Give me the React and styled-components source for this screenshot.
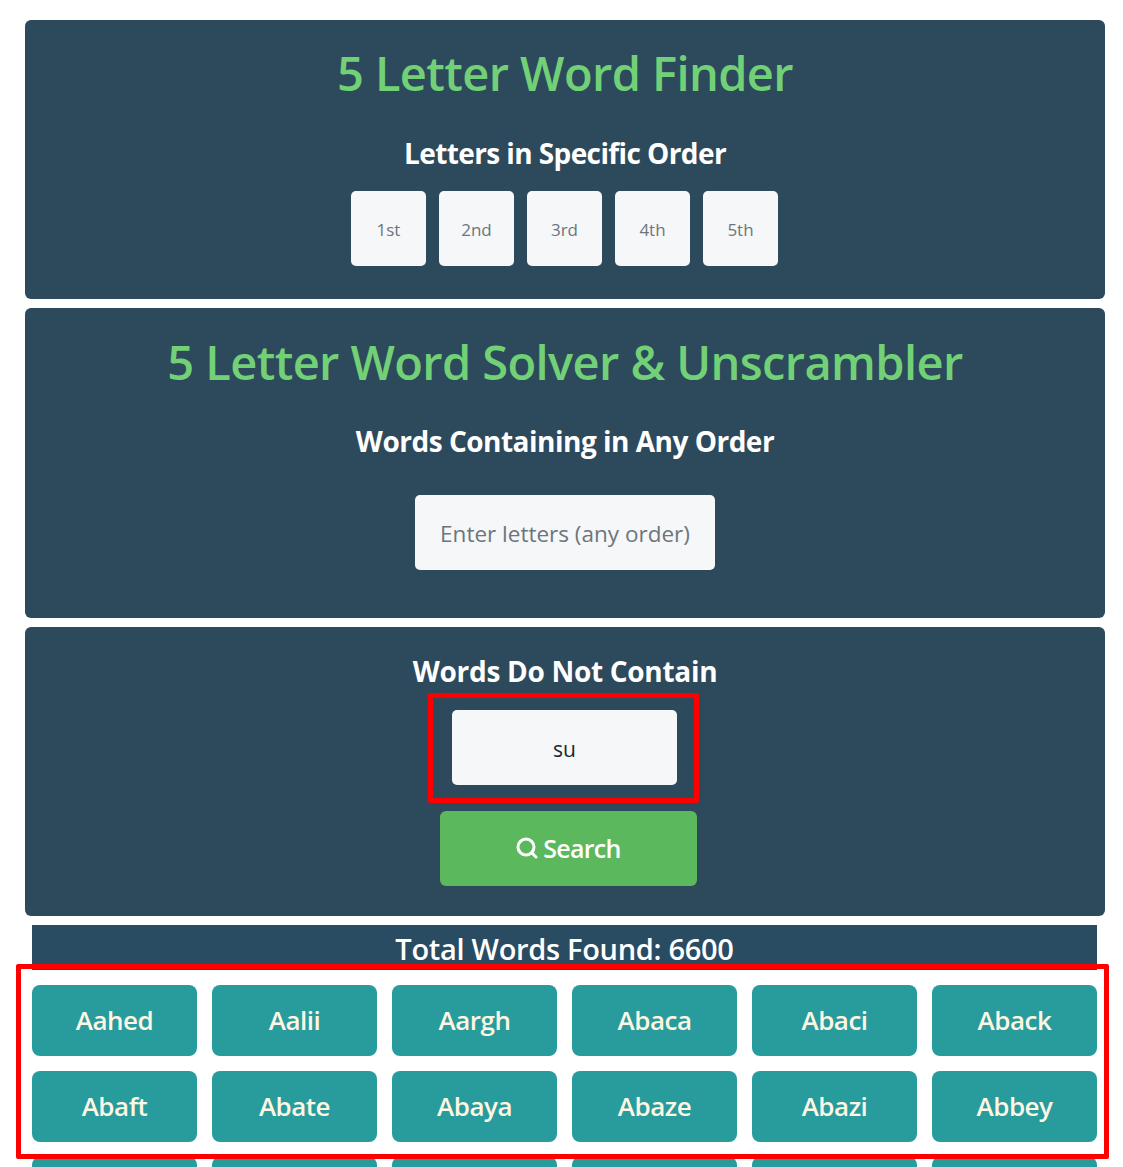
import styled, { createGlobalStyle } from "styled-components";

const GlobalStyle = createGlobalStyle`
  html, body {
    margin: 0;
    height: 100%;
    overflow: hidden;
    background: #fff;
    font-family: "Open Sans", "Noto Sans", sans-serif;
  }
`;

const Page = styled.div`
  padding: 20px 18px 0 25px;
`;

const Panel = styled.section`
  display: flex;
  flex-direction: column;
  align-items: center;
  background: #2d4a5c;
  border-radius: 6px;
  margin-bottom: 9px;
  height: ${(p) => p.$height}px;
  padding-top: ${(p) => p.$top}px;
  box-sizing: border-box;
`;

const Title = styled.h1`
  margin: 0;
  color: #72d177;
  font-size: 47px;
  font-weight: 600;
  line-height: 60px;
  letter-spacing: -0.6px;
`;

const SubTitle = styled.h2`
  margin: ${(p) => p.$top || 0}px 0 0;
  color: #fff;
  font-size: 28px;
  font-weight: 700;
  line-height: 36px;
  letter-spacing: ${(p) => p.$spacing ?? -0.6}px;
`;

const LetterRow = styled.div`
  display: flex;
  gap: 13px;
  margin: 20px 1px 0 0;
`;

const Field = styled.input`
  display: block;
  box-sizing: border-box;
  width: ${(p) => p.$width}px;
  height: 75px;
  border: 0;
  border-radius: 5px;
  background: #f6f7f9;
  color: #212529;
  font-family: inherit;
  font-size: ${(p) => p.$size}px;
  text-align: center;
  outline: none;
  padding: 2px 0 0;
  &::placeholder {
    color: #6c757d;
    opacity: 1;
  }
`;

const AnyOrderWrap = styled.div`
  margin-top: 36px;
`;

const Highlighted = styled.div`
  position: relative;
  margin: 21px 1px 0 0;
`;

const RedBox = styled.span`
  position: absolute;
  top: ${(p) => p.$top}px;
  left: ${(p) => p.$left}px;
  right: ${(p) => p.$right}px;
  bottom: ${(p) => p.$bottom}px;
  border: 5px solid #fe0000;
  border-radius: 2px;
  pointer-events: none;
  z-index: 2;
`;

const SearchButton = styled.button`
  display: flex;
  align-items: center;
  justify-content: center;
  gap: 5px;
  width: 257px;
  height: 75px;
  margin: 26px 0 0 7px;
  border: 0;
  border-radius: 6px;
  background: #5cb85c;
  color: #fff;
  font-family: inherit;
  font-size: 25px;
  font-weight: 600;
  letter-spacing: -0.7px;
  padding: 0 0 1px;
`;

const TotalBar = styled.div`
  margin: 0 8px 0 7px;
  height: 45px;
  background: #294c62;
  color: #fff;
  font-size: 29px;
  font-weight: 600;
  line-height: 47px;
  text-align: center;
  letter-spacing: -0.3px;
`;

const WordSection = styled.div`
  margin: 15px 8px 0 7px;
`;

const Highlight = styled.div`
  position: relative;
`;

const WordGrid = styled.div`
  display: grid;
  grid-template-columns: repeat(6, 165px);
  grid-auto-rows: 71px;
  gap: 15px;
`;

const WordButton = styled.button`
  border: 0;
  border-radius: 8px;
  background: #289c9c;
  color: #fdf6e3;
  font-family: inherit;
  font-size: 26px;
  font-weight: 600;
  letter-spacing: -0.5px;
  padding: 0 0 1px;
`;

const NextRow = styled(WordGrid)`
  margin-top: 15px;
`;

const SearchIcon = () => (
  <svg width="22" height="22" viewBox="0 0 22 22" fill="none" stroke="#fff" strokeWidth="3" strokeLinecap="round">
    <circle cx="10" cy="10" r="8" />
    <path d="M16 16l4 4" />
  </svg>
);

const positions = ["1st", "2nd", "3rd", "4th", "5th"];
const words = ["Aahed", "Aalii", "Aargh", "Abaca", "Abaci", "Aback", "Abaft", "Abate", "Abaya", "Abaze", "Abazi", "Abbey"];

export default function App() {
  return (
    <Page>
      <GlobalStyle />
      <Panel $height={279} $top={23}>
        <Title>5 Letter Word Finder</Title>
        <SubTitle $top={32}>Letters in Specific Order</SubTitle>
        <LetterRow>
          {positions.map((p) => (
            <Field key={p} $width={75} $size={17} placeholder={p} />
          ))}
        </LetterRow>
      </Panel>

      <Panel $height={310} $top={24}>
        <Title>5 Letter Word Solver &amp; Unscrambler</Title>
        <SubTitle $top={31} $spacing={-0.5}>Words Containing in Any Order</SubTitle>
        <AnyOrderWrap>
          <Field $width={300} $size={22.5} placeholder="Enter letters (any order)" />
        </AnyOrderWrap>
      </Panel>

      <Panel $height={289} $top={26}>
        <SubTitle $spacing={-0.3}>Words Do Not Contain</SubTitle>
        <Highlighted>
          <Field $width={225} $size={21} defaultValue="su" />
          <RedBox $top={-17} $left={-24} $right={-22} $bottom={-18} />
        </Highlighted>
        <SearchButton>
          <SearchIcon />
          Search
        </SearchButton>
      </Panel>

      <TotalBar>Total Words Found: 6600</TotalBar>

      <WordSection>
        <Highlight>
          <WordGrid>
            {words.map((w) => (
              <WordButton key={w}>{w}</WordButton>
            ))}
          </WordGrid>
          <RedBox $top={-21} $left={-16} $right={-12} $bottom={-17} />
        </Highlight>
        <NextRow>
          {[0, 1, 2, 3, 4, 5].map((i) => (
            <WordButton key={i} />
          ))}
        </NextRow>
      </WordSection>
    </Page>
  );
}
